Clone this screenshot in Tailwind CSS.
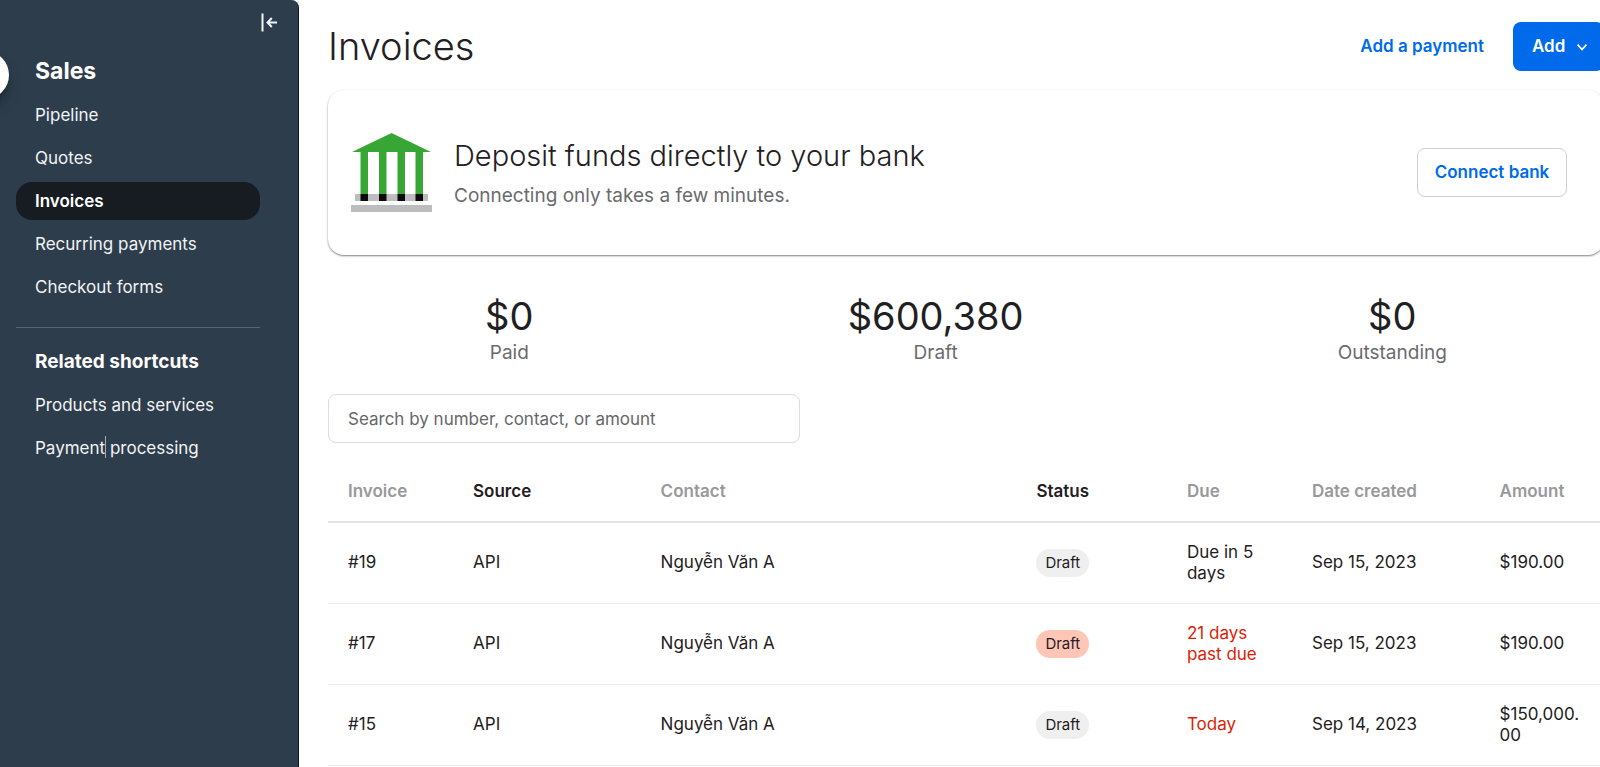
<!DOCTYPE html>
<html lang="en">
<head>
  <meta charset="UTF-8" />
  <meta name="viewport" content="width=device-width,initial-scale=1" />
  <title>Invoices</title>
  <script src="https://cdn.jsdelivr.net/npm/@tailwindcss/browser@4"></script>
</head>

<body class="bg-white text-[#1f2022] font-['Inter','Noto_Sans',sans-serif] min-h-screen flex overflow-hidden">

<!-- Sidebar -->
<aside class="relative w-[299px] shrink-0 min-h-screen bg-[#2e3d4c] text-[#f1f3f4] rounded-tr-lg border-r border-[#10143a] pl-4 pr-[38px] overflow-hidden">
  <div class="absolute -left-[39px] top-[51px] size-12 rounded-full bg-white shadow-lg shadow-black/40"></div>

  <div class="flex justify-end pt-3 -mr-[17px]">
    <button type="button" aria-label="Collapse menu" class="block">
      <svg class="block w-4 h-5" viewBox="0 0 16 20" fill="none" stroke="currentColor" stroke-width="2">
        <path d="M1.500 1.500v18" />
        <path d="M16 10.500H7M10.800 6 6.500 10.500l4.300 4.500" />
      </svg>
    </button>
  </div>

  <h2 class="mt-[23px] px-[19px] h-8 leading-8 text-[23px] font-bold text-white">Sales</h2>
  <nav class="mt-[9px] flex flex-col gap-[5px] text-[17px]">
    <a href="#" class="h-[38px] px-[19px] pt-0.5 flex items-center">Pipeline</a>
    <a href="#" class="h-[38px] px-[19px] pt-0.5 flex items-center">Quotes</a>
    <a href="#" class="h-[38px] px-[19px] pt-0.5 flex items-center rounded-2xl bg-[#161c22] font-semibold text-white">Invoices</a>
    <a href="#" class="h-[38px] px-[19px] pt-0.5 flex items-center">Recurring payments</a>
    <a href="#" class="h-[38px] px-[19px] pt-0.5 flex items-center">Checkout forms</a>
  </nav>

  <hr class="mt-[21px] mb-5 border-[#586673]" />

  <h3 class="px-[19px] h-7 leading-7 text-[19px] font-bold text-white">Related shortcuts</h3>
  <nav class="mt-[10px] flex flex-col gap-[5px] text-[17px]">
    <a href="#" class="h-[38px] px-[19px] pt-0.5 flex items-center">Products and services</a>
    <a href="#" class="h-[38px] px-[19px] pt-0.5 flex items-center whitespace-pre"><span class="relative">Payment<span class="absolute -right-px top-0 w-px h-[22px] bg-[#a3abb2]"></span></span> processing</a>
  </nav>
</aside>

<!-- Content, runs a little past the right edge -->
<main class="flex-1 min-w-0 pl-[29px] -mr-1 pt-[22px]">

  <header class="flex items-center justify-between">
    <h1 class="text-[38px] leading-[49px] font-light">Invoices</h1>
    <div class="flex items-center text-[17px] font-semibold">
      <a href="#" class="text-[#006bea] mr-[29px]">Add a payment</a>
      <button type="button" class="h-[49px] w-[91px] pl-[19px] rounded-lg bg-[#006bea] text-white flex items-center gap-3">
        Add
        <svg class="w-[10px] h-2" viewBox="0 0 10 8" fill="none" stroke="currentColor" stroke-width="1.800"><path d="M.5 1.500 5 6.500l4.500-5" /></svg>
      </button>
    </div>
  </header>

  <section class="mt-[19px] h-[165px] rounded-2xl bg-white shadow-[0_1px_2px_rgba(0,0,0,0.5)] pl-[23px] pr-[37px] flex items-center">
    <svg class="w-[81px] h-[79px] shrink-0" viewBox="0 0 81 79">
      <path d="M1 19 40.500 0 80 19H72V61H64.500V19H54V61H46.500V19H35.500V61H28V19H17V61H9.500V19Z" fill="#37a635" />
      <path d="M4 61H77v7H4zM0 72H81v7H0z" fill="#bdbdbd" />
      <path d="M9.500 61H17v7H9.500zM28 61h7.500v7H28zM46.500 61H54v7H46.500zM64.500 61H72v7H64.500z" fill="#0a0a0a" />
    </svg>
    <div class="ml-[22px] pt-0.5">
      <h2 class="text-[29px] leading-9 font-light">Deposit funds directly to your bank</h2>
      <p class="mt-2 text-[19px] leading-7 text-[#6a6b6d]">Connecting only takes a few minutes.</p>
    </div>
    <button type="button" class="ml-auto h-[49px] w-[150px] rounded-lg border border-[#cfcfcf] text-[17px] font-semibold text-[#006bea]">Connect bank</button>
  </section>

  <section class="mt-10 flex justify-around text-center">
    <div>
      <div class="text-[38px] leading-[42px]">$0</div>
      <div class="text-[19px] leading-8 text-[#6a6b6d]">Paid</div>
    </div>
    <div>
      <div class="text-[38px] leading-[42px]">$600,380</div>
      <div class="text-[19px] leading-8 text-[#6a6b6d]">Draft</div>
    </div>
    <div>
      <div class="text-[38px] leading-[42px]">$0</div>
      <div class="text-[19px] leading-8 text-[#6a6b6d]">Outstanding</div>
    </div>
  </section>

  <input type="search" aria-label="Search invoices" placeholder="Search by number, contact, or amount"
         class="block mt-[25px] h-[49px] w-[37%] px-[19px] rounded-lg border border-[#dcdcdc] text-[17px] placeholder:text-[#66676a]" />

  <table class="mt-[19px] w-full table-fixed text-[17px] leading-[21px] text-left">
    <colgroup>
      <col class="w-[9.800%]" />
      <col class="w-[14.700%]" />
      <col class="w-[29.450%]" />
      <col class="w-[11.800%]" />
      <col class="w-[9.800%]" />
      <col class="w-[14.700%]" />
      <col class="w-[9.750%]" />
    </colgroup>
    <thead>
      <tr class="h-[60px] border-b-2 border-[#e4e4e4] text-[#98999b]">
        <th class="px-5 font-semibold">Invoice</th>
        <th class="px-5 font-semibold text-[#1f2022]">Source</th>
        <th class="px-5 font-semibold">Contact</th>
        <th class="px-5 font-semibold text-[#1f2022]">Status</th>
        <th class="px-5 font-semibold">Due</th>
        <th class="px-5 font-semibold">Date created</th>
        <th class="px-5 font-semibold">Amount</th>
      </tr>
    </thead>
    <tbody>
      <tr class="h-[81px] border-b border-[#ececec]">
        <td class="px-5">#19</td>
        <td class="px-5">API</td>
        <td class="px-5">Nguyễn Văn A</td>
        <td class="px-5"><span class="inline-block px-[9px] rounded-full bg-[#efefef] text-[15px] leading-7">Draft</span></td>
        <td class="pl-5 pr-4">Due in 5 days</td>
        <td class="px-5">Sep 15, 2023</td>
        <td class="px-5 break-all">$190.00</td>
      </tr>
      <tr class="h-[81px] border-b border-[#ececec]">
        <td class="px-5">#17</td>
        <td class="px-5">API</td>
        <td class="px-5">Nguyễn Văn A</td>
        <td class="px-5"><span class="inline-block px-[9px] rounded-full bg-[#ffc6b8] text-[15px] leading-7">Draft</span></td>
        <td class="pl-5 pr-4 text-[#dc1d05]">21 days past due</td>
        <td class="px-5">Sep 15, 2023</td>
        <td class="px-5 break-all">$190.00</td>
      </tr>
      <tr class="h-[81px] border-b border-[#ececec]">
        <td class="px-5">#15</td>
        <td class="px-5">API</td>
        <td class="px-5">Nguyễn Văn A</td>
        <td class="px-5"><span class="inline-block px-[9px] rounded-full bg-[#efefef] text-[15px] leading-7">Draft</span></td>
        <td class="pl-5 pr-4 text-[#dc1d05]">Today</td>
        <td class="px-5">Sep 14, 2023</td>
        <td class="px-5 break-all">$150,000.00</td>
      </tr>
    </tbody>
  </table>
</main>

</body>
</html>
